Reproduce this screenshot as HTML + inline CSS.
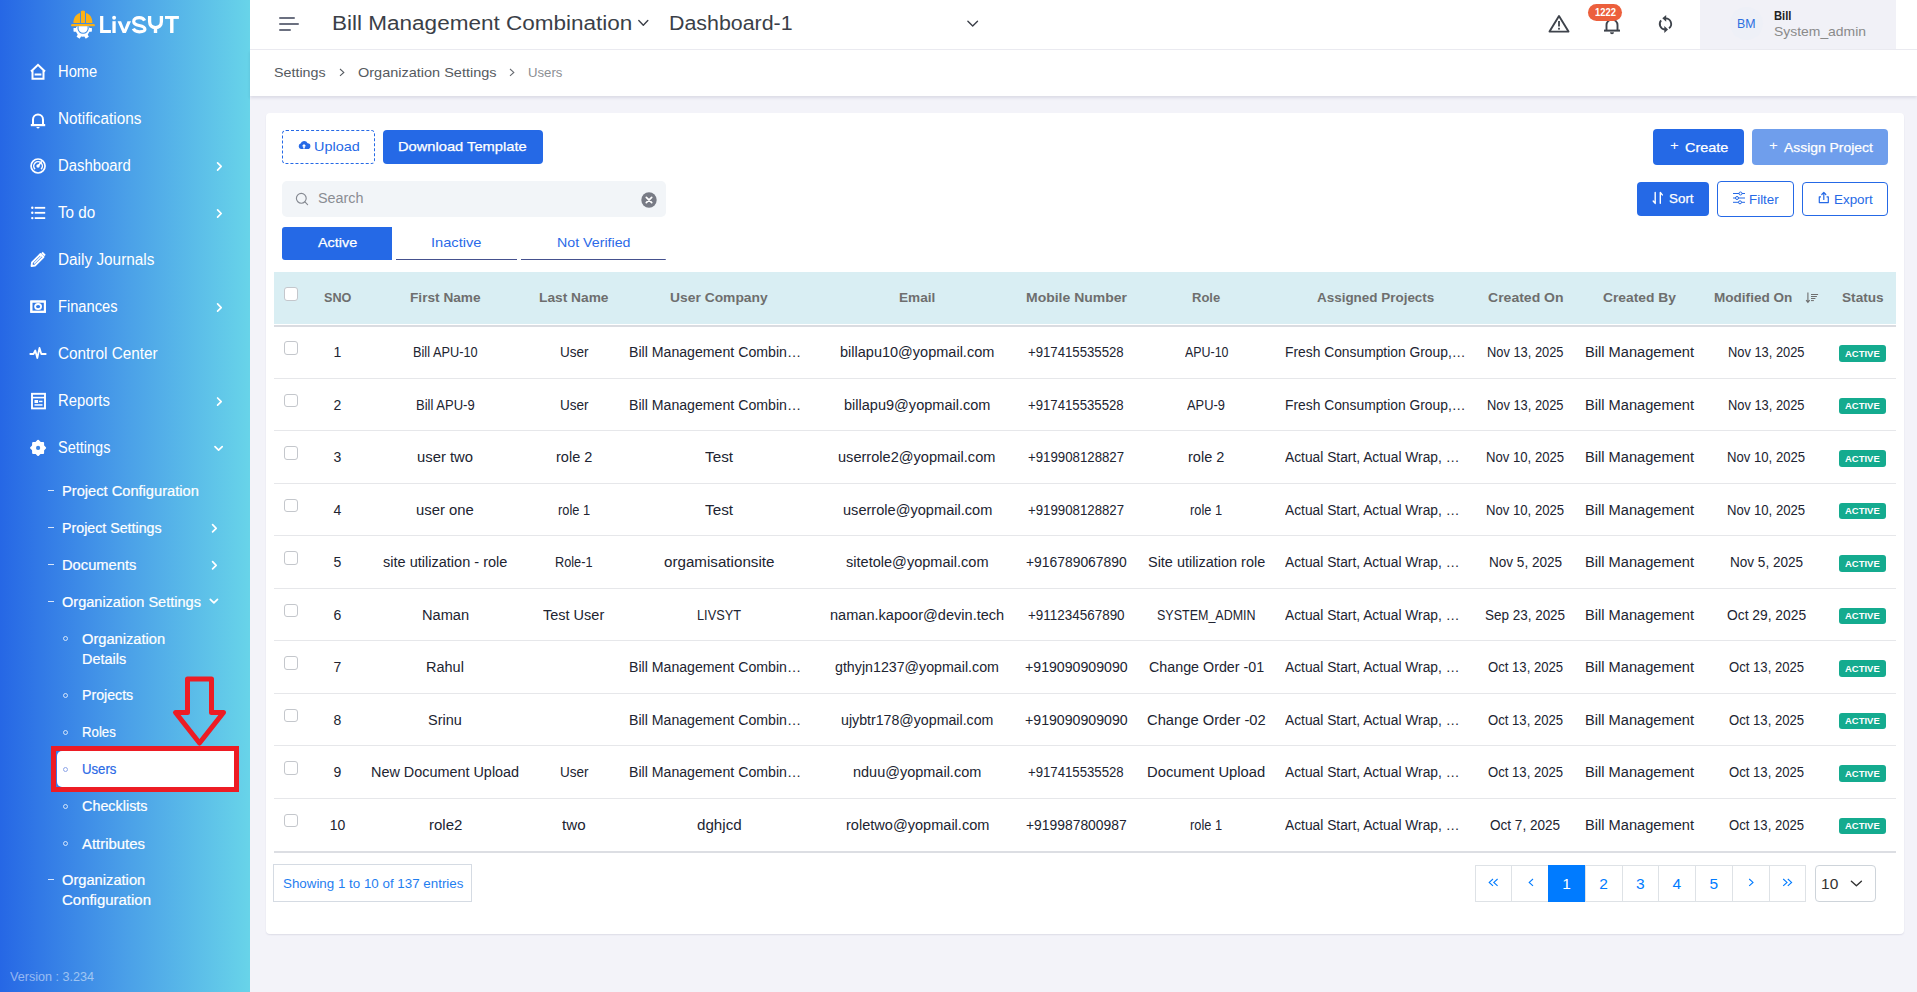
<!DOCTYPE html>
<html><head><meta charset="utf-8"><title>Users</title>
<style>
html,body{margin:0;padding:0;}
body{width:1917px;height:992px;overflow:hidden;position:relative;background:#f3f3f9;font-family:"Liberation Sans", sans-serif;}
.t{position:absolute;white-space:nowrap;transform-origin:0 0;}
svg{overflow:visible}
</style></head><body>
<div style="position:absolute;left:0;top:0;width:250px;height:992px;background:linear-gradient(90deg,#2667e5 0%,#4a9fe8 50%,#68d4e9 100%);"></div>
<div style="position:absolute;left:250px;top:0;width:1667px;height:49px;background:#fff;border-bottom:1px solid #ebebf1;"></div>
<div style="position:absolute;left:250px;top:50px;width:1667px;height:46px;background:#fff;box-shadow:0 2px 3px rgba(30,30,70,0.11);"></div>
<div style="position:absolute;left:266px;top:113px;width:1638px;height:821px;background:#fff;border-radius:4px;box-shadow:0 1px 1.5px rgba(30,30,80,0.10);"></div>
<svg style="position:absolute;left:68px;top:6px" width="30" height="36" viewBox="0 0 30 36">
<defs><clipPath id="gc"><rect x="0" y="20.4" width="30" height="16"/></clipPath></defs>
<path d="M5.4 16.9 C5.4 11.5 8.2 7.8 12 6.9 L12 16.9 Z" fill="#fbb116"/>
<path d="M12.9 16.9 L12.9 5.3 Q15 3.6 17 5.3 L17 16.9 Z" fill="#fbb116"/>
<path d="M18 6.9 C21.8 7.8 24.4 11.5 24.4 16.9 L18 16.9 Z" fill="#fbb116"/>
<path d="M3.1 19.2 Q3.1 18 4.5 18 L25.5 18 Q26.9 18 26.9 19.2 L26.4 20.2 L3.6 20.2 Z" fill="#fbb116"/>
<g clip-path="url(#gc)">
<circle cx="14.7" cy="23.8" r="7" fill="#fff"/>
<g fill="#fff" transform="translate(14.7 23.8)">
<rect x="5.8" y="-1.9" width="3.4" height="3.8" rx="0.6"/>
<rect x="5.8" y="-1.9" width="3.4" height="3.8" rx="0.6" transform="rotate(60)"/>
<rect x="5.8" y="-1.9" width="3.4" height="3.8" rx="0.6" transform="rotate(120)"/>
<rect x="5.8" y="-1.9" width="3.4" height="3.8" rx="0.6" transform="rotate(180)"/>
<rect x="5.8" y="-1.9" width="3.4" height="3.8" rx="0.6" transform="rotate(240)"/>
<rect x="5.8" y="-1.9" width="3.4" height="3.8" rx="0.6" transform="rotate(300)"/>
</g>
<circle cx="15.1" cy="22.2" r="5.1" fill="#fff" stroke="#3f8fe7" stroke-width="1.1"/>
</g>
</svg>
<svg style="position:absolute;left:96px;top:10px" width="90" height="30" viewBox="0 0 90 30"><g fill="#fff">
<path d="M4.1 6 H7.3 V20.1 H14.9 V23 H4.1 Z"/>
<circle cx="18.1" cy="7.7" r="1.95"/><rect x="16.4" y="11.2" width="3.3" height="11.8"/>
<path d="M21.6 11.2 H25.1 L28.3 19.2 L31.5 11.2 H35 L29.9 23 H26.7 Z"/>
<rect x="69" y="6" width="13.9" height="2.9"/><rect x="74.1" y="6" width="3.4" height="17"/>
<rect x="57.8" y="16" width="3.4" height="7"/>
</g>
<path d="M48.6 10.6 C47.7 8.6 45.8 7.6 43.2 7.6 C40.1 7.6 37.7 9.1 37.7 11.6 C37.7 14.4 40.5 15 43.2 15.5 C46.2 16.1 48.9 16.9 48.9 19.3 C48.9 21.4 46.6 21.8 43.3 21.8 C40.4 21.8 38.3 20.9 37.3 18.7" fill="none" stroke="#fff" stroke-width="3.2"/>
<path d="M53.6 6 V11.6 C53.6 15.3 56 17.6 59.5 17.6 C63 17.6 65.4 15.3 65.4 11.6 V6" fill="none" stroke="#fff" stroke-width="3.3"/>
</svg>
<svg style="position:absolute;left:0;top:0" width="1" height="1"><path d="M217.60 162.86 L221.20 166.46 L217.60 170.06" fill="none" stroke="#fff" stroke-width="1.7" stroke-linecap="round" stroke-linejoin="round"/></svg>
<svg style="position:absolute;left:0;top:0" width="1" height="1"><path d="M217.60 209.89 L221.20 213.49 L217.60 217.09" fill="none" stroke="#fff" stroke-width="1.7" stroke-linecap="round" stroke-linejoin="round"/></svg>
<svg style="position:absolute;left:0;top:0" width="1" height="1"><path d="M217.60 303.95 L221.20 307.55 L217.60 311.15" fill="none" stroke="#fff" stroke-width="1.7" stroke-linecap="round" stroke-linejoin="round"/></svg>
<svg style="position:absolute;left:0;top:0" width="1" height="1"><path d="M217.60 398.01 L221.20 401.61 L217.60 405.21" fill="none" stroke="#fff" stroke-width="1.7" stroke-linecap="round" stroke-linejoin="round"/></svg>
<svg style="position:absolute;left:0;top:0" width="1" height="1"><path d="M215.00 446.60 L218.60 450.20 L222.20 446.60" fill="none" stroke="#fff" stroke-width="1.7" stroke-linecap="round" stroke-linejoin="round"/></svg>
<svg style="position:absolute;left:29px;top:63px" width="18" height="17" viewBox="0 0 18 17"><path d="M2 8.5 L9 1.8 L16 8.5" fill="none" stroke="#fff" stroke-width="2" stroke-linejoin="miter"/><path d="M3.5 7.5 V15.8 H14.5 V7.5" fill="none" stroke="#fff" stroke-width="2"/><rect x="5.6" y="10.5" width="6.8" height="2" fill="#fff"/></svg>
<svg style="position:absolute;left:29px;top:111px" width="18" height="19" viewBox="0 0 18 19"><path d="M4 13.5 V8.5 A5 5 0 0 1 14 8.5 V13.5" fill="none" stroke="#fff" stroke-width="2"/><rect x="1.8" y="13" width="14.4" height="2.2" fill="#fff"/><path d="M7 16 H11 L9 17.8 Z" fill="#fff"/></svg>
<svg style="position:absolute;left:29px;top:157px" width="18" height="18" viewBox="0 0 18 18"><circle cx="9.05" cy="9" r="7" fill="none" stroke="#fff" stroke-width="1.7"/><path d="M6 12.1 A4.3 4.3 0 1 1 12.1 12.1" fill="none" stroke="#fff" stroke-width="1.5"/><path d="M9.05 9 L12.3 5" stroke="#fff" stroke-width="1.7" stroke-linecap="round"/><circle cx="9.05" cy="9" r="1.7" fill="#fff"/></svg>
<svg style="position:absolute;left:29px;top:203px" width="18" height="18" viewBox="0 0 18 18"><circle cx="3.3" cy="4.8" r="1.2" fill="#fff"/><circle cx="3.3" cy="9.8" r="1.2" fill="#fff"/><circle cx="3.3" cy="15.1" r="1.2" fill="#fff"/><rect x="5.7" y="3.9" width="10.5" height="1.8" fill="#fff"/><rect x="5.7" y="8.9" width="10.5" height="1.8" fill="#fff"/><rect x="5.7" y="14.2" width="10.5" height="1.8" fill="#fff"/></svg>
<svg style="position:absolute;left:29px;top:251px" width="18" height="17" viewBox="0 0 18 17"><path d="M2.5 15 L3 11.5 L11.5 3 L14.5 6 L6 14.5 Z" fill="none" stroke="#fff" stroke-width="1.8" stroke-linejoin="round"/><path d="M5 12.5 L12.5 5" stroke="#fff" stroke-width="1.2"/><path d="M13 1.5 L16 4.5" stroke="#fff" stroke-width="2"/></svg>
<svg style="position:absolute;left:29px;top:299px" width="18" height="15" viewBox="0 0 18 15"><rect x="1.3" y="1.5" width="15.6" height="12.3" fill="#fff"/><rect x="3.3" y="3.5" width="11.6" height="8.3" fill="#3179e6"/><rect x="2.3" y="2.5" width="13.6" height="10.3" fill="none" stroke="#fff" stroke-width="2"/><ellipse cx="9.1" cy="7.6" rx="3" ry="2.6" fill="none" stroke="#fff" stroke-width="1.8"/></svg>
<svg style="position:absolute;left:29px;top:346px" width="18" height="14" viewBox="0 0 18 14"><path d="M1.3 8 H4.5 L6.3 4.5 L8.3 12 L10.5 2 L12.3 8 H16.7" fill="none" stroke="#fff" stroke-width="1.8" stroke-linejoin="round" stroke-linecap="round"/></svg>
<svg style="position:absolute;left:29px;top:392px" width="18" height="18" viewBox="0 0 18 18"><rect x="3" y="1.8" width="13" height="14.6" fill="none" stroke="#fff" stroke-width="1.9"/><rect x="3" y="4.8" width="13" height="1.6" fill="#fff"/><rect x="5.5" y="8" width="3.6" height="3" fill="#fff"/><rect x="10" y="8.7" width="3.5" height="1.5" fill="#fff"/><rect x="5.5" y="12.2" width="8" height="1.5" fill="#fff"/></svg>
<svg style="position:absolute;left:29px;top:439px" width="18" height="18" viewBox="0 0 18 18"><g transform="translate(9.1 8.9)"><rect x="-6" y="-6" width="12" height="12" rx="1" fill="#fff"/><rect x="-6" y="-6" width="12" height="12" rx="1" fill="#fff" transform="rotate(45)"/></g><circle cx="9.1" cy="8.9" r="2.1" fill="#3a84e6"/></svg>
<div style="position:absolute;left:48px;top:489.7px;width:5.5px;height:1.3px;background:rgba(255,255,255,0.8)"></div>
<div style="position:absolute;left:48px;top:526.7px;width:5.5px;height:1.3px;background:rgba(255,255,255,0.8)"></div>
<svg style="position:absolute;left:0;top:0" width="1" height="1"><path d="M212.60 524.70 L216.20 528.30 L212.60 531.90" fill="none" stroke="#fff" stroke-width="1.7" stroke-linecap="round" stroke-linejoin="round"/></svg>
<div style="position:absolute;left:48px;top:563.7px;width:5.5px;height:1.3px;background:rgba(255,255,255,0.8)"></div>
<svg style="position:absolute;left:0;top:0" width="1" height="1"><path d="M212.60 561.70 L216.20 565.30 L212.60 568.90" fill="none" stroke="#fff" stroke-width="1.7" stroke-linecap="round" stroke-linejoin="round"/></svg>
<div style="position:absolute;left:48px;top:600.7px;width:5.5px;height:1.3px;background:rgba(255,255,255,0.8)"></div>
<svg style="position:absolute;left:0;top:0" width="1" height="1"><path d="M210.30 599.30 L213.90 602.90 L217.50 599.30" fill="none" stroke="#fff" stroke-width="1.7" stroke-linecap="round" stroke-linejoin="round"/></svg>
<div style="position:absolute;left:57px;top:751px;width:178px;height:36px;background:#fff;border-radius:5px 0 0 5px;box-shadow:-1.5px 0 0 #3a7be6"></div>
<div style="position:absolute;left:63px;top:636.0px;width:5px;height:5px;border-radius:50%;border:1.2px solid rgba(255,255,255,0.75);box-sizing:border-box"></div>
<div style="position:absolute;left:63px;top:692.5px;width:5px;height:5px;border-radius:50%;border:1.2px solid rgba(255,255,255,0.75);box-sizing:border-box"></div>
<div style="position:absolute;left:63px;top:729.5px;width:5px;height:5px;border-radius:50%;border:1.2px solid rgba(255,255,255,0.75);box-sizing:border-box"></div>
<div style="position:absolute;left:63px;top:766.7px;width:5px;height:5px;border-radius:50%;border:1.2px solid #8fa6e8;box-sizing:border-box"></div>
<div style="position:absolute;left:63px;top:803.6px;width:5px;height:5px;border-radius:50%;border:1.2px solid rgba(255,255,255,0.75);box-sizing:border-box"></div>
<div style="position:absolute;left:63px;top:840.9px;width:5px;height:5px;border-radius:50%;border:1.2px solid rgba(255,255,255,0.75);box-sizing:border-box"></div>
<div style="position:absolute;left:48px;top:879px;width:5.5px;height:1.3px;background:rgba(255,255,255,0.8)"></div>
<div style="position:absolute;left:51px;top:746px;width:188px;height:46px;border:5px solid #ed1c24;box-sizing:border-box"></div>
<svg style="position:absolute;left:0;top:0" width="250" height="992"><path d="M187.5 679 H211.5 V712.5 H223.5 L199.5 743 L175.5 712.5 H187.5 Z" fill="none" stroke="#ed1c24" stroke-width="5" stroke-linejoin="round"/></svg>
<div style="position:absolute;left:279px;top:17px;width:16px;height:2px;background:#6b7080;border-radius:1px"></div>
<div style="position:absolute;left:279px;top:23px;width:20px;height:2px;background:#6b7080;border-radius:1px"></div>
<div style="position:absolute;left:279px;top:29px;width:12px;height:2px;background:#6b7080;border-radius:1px"></div>
<svg style="position:absolute;left:0;top:0" width="1" height="1"><path d="M638.80 20.60 L643.30 25.20 L647.80 20.60" fill="none" stroke="#3b3f48" stroke-width="1.4" stroke-linecap="round" stroke-linejoin="round"/></svg>
<svg style="position:absolute;left:0;top:0" width="1" height="1"><path d="M967.90 21.30 L972.70 26.00 L977.50 21.30" fill="none" stroke="#3b3f48" stroke-width="1.4" stroke-linecap="round" stroke-linejoin="round"/></svg>
<svg style="position:absolute;left:1548px;top:14px" width="22" height="19" viewBox="0 0 22 19"><path d="M11 2 L20.5 17.6 H1.5 Z" fill="none" stroke="#3e434b" stroke-width="1.9" stroke-linejoin="round"/><rect x="10.1" y="7" width="1.8" height="5.5" fill="#3e434b"/><rect x="10.1" y="13.8" width="1.8" height="1.8" fill="#3e434b"/></svg>
<svg style="position:absolute;left:1601px;top:16px" width="22" height="19" viewBox="0 0 22 19"><path d="M5.5 14 V9 A5.5 5.5 0 0 1 16.5 9 V14" fill="none" stroke="#3e434b" stroke-width="1.9"/><rect x="3" y="13.6" width="16" height="2" fill="#3e434b"/><path d="M9 16.3 H13 A2 2 0 0 1 9 16.3Z" fill="#3e434b"/></svg>
<div style="position:absolute;left:1588px;top:4px;width:34px;height:16.5px;background:#ec5f3c;border-radius:9px"></div>
<svg style="position:absolute;left:1655px;top:13px" width="20" height="21" viewBox="0 0 20 21"><path d="M10.6 5.3 A5.6 5.6 0 0 1 14 15.3" fill="none" stroke="#3e434b" stroke-width="1.8"/><path d="M7.3 5.3 L11.2 1.9 L11.2 8.7 Z" fill="#3e434b"/><path d="M6.1 7.3 A5.6 5.6 0 0 0 9.9 16.5" fill="none" stroke="#3e434b" stroke-width="1.8"/><path d="M13 16.5 L9.3 13.1 L9.3 19.9 Z" fill="#3e434b"/></svg>
<div style="position:absolute;left:1700px;top:0;width:196px;height:49px;background:#f1f1f7"></div>
<div style="position:absolute;left:1730px;top:7px;width:33px;height:33px;border-radius:50%;background:#eef0f7"></div>
<svg style="position:absolute;left:339px;top:68px" width="6" height="9" viewBox="0 0 6 9"><path d="M1 1 L4.8 4.4 L1 7.8" fill="none" stroke="#555a60" stroke-width="1.1"/></svg>
<svg style="position:absolute;left:508.5px;top:68px" width="6" height="9" viewBox="0 0 6 9"><path d="M1 1 L4.8 4.4 L1 7.8" fill="none" stroke="#666a70" stroke-width="1.1"/></svg>
<div style="position:absolute;left:282px;top:130px;width:93px;height:34px;border:1.3px dashed #2569e6;border-radius:4px;box-sizing:border-box"></div>
<svg style="position:absolute;left:298px;top:140px" width="12" height="10" viewBox="0 0 12 10"><path d="M3 9 A2.8 2.8 0 0 1 2.6 3.6 A3.8 3.8 0 0 1 9.6 3.2 A2.9 2.9 0 0 1 9.4 9 Z" fill="#2569e6"/><path d="M6 4 L8.2 6.3 H6.8 V8.5 H5.2 V6.3 H3.8 Z" fill="#fff"/></svg>
<div style="position:absolute;left:383px;top:130px;width:160px;height:34px;background:#2569e6;border-radius:4px"></div>
<div style="position:absolute;left:282px;top:181px;width:384px;height:36px;background:#f2f5f8;border-radius:5px"></div>
<svg style="position:absolute;left:295px;top:192px" width="14" height="14" viewBox="0 0 14 14"><circle cx="6.3" cy="6.3" r="4.9" fill="none" stroke="#868a92" stroke-width="1.15"/><path d="M9.9 9.9 L12.6 12.6" stroke="#868a92" stroke-width="1.15" stroke-linecap="round"/></svg>
<svg style="position:absolute;left:641px;top:192px" width="16" height="16" viewBox="0 0 16 16"><circle cx="8" cy="8" r="7.7" fill="#787b85"/><path d="M5.3 5.3 L10.7 10.7 M10.7 5.3 L5.3 10.7" stroke="#fff" stroke-width="1.7" stroke-linecap="round"/></svg>
<div style="position:absolute;left:282px;top:227px;width:110px;height:33px;background:#2569e6;border-radius:3px 0 0 3px"></div>
<div style="position:absolute;left:396px;top:258.8px;width:121px;height:1.3px;background:#45518e"></div>
<div style="position:absolute;left:521px;top:258.8px;width:145px;height:1.3px;background:#45518e;border-radius:0 0 3px 0"></div>
<div style="position:absolute;left:1653px;top:129px;width:91px;height:36px;background:#2569e6;border-radius:4px"></div>
<div style="position:absolute;left:1752px;top:129px;width:136px;height:36px;background:#6f9eec;border-radius:4px"></div>
<div style="position:absolute;left:1637px;top:182px;width:72px;height:34px;background:#2569e6;border-radius:4px"></div>
<svg style="position:absolute;left:1652px;top:191px" width="12" height="14" viewBox="0 0 12 14"><path d="M3.2 1.5 V12.3 M1.2 10 L3.2 12.4 M8.3 12.3 V1.6 M8.3 1.5 L10.3 3.9" fill="none" stroke="#fff" stroke-width="1.4" stroke-linecap="round"/></svg>
<div style="position:absolute;left:1717px;top:181px;width:77px;height:36px;border:1px solid #2569e6;border-radius:4px;box-sizing:border-box"></div>
<svg style="position:absolute;left:1732px;top:191px" width="14" height="14" viewBox="0 0 14 14"><path d="M1 2.5 H13 M1 7 H13 M1 11.3 H13" stroke="#2569e6" stroke-width="1"/><circle cx="8.5" cy="2.5" r="1.5" fill="#fff" stroke="#2569e6" stroke-width="1"/><circle cx="5" cy="7" r="1.5" fill="#fff" stroke="#2569e6" stroke-width="1"/><circle cx="8" cy="11.3" r="1.5" fill="#fff" stroke="#2569e6" stroke-width="1"/></svg>
<div style="position:absolute;left:1802px;top:182px;width:86px;height:34px;border:1px solid #2569e6;border-radius:4px;box-sizing:border-box"></div>
<svg style="position:absolute;left:1817px;top:190px" width="13" height="14" viewBox="0 0 13 14"><path d="M4 6.8 H2.3 V12.6 H11.3 V6.8 H9.6" fill="none" stroke="#2569e6" stroke-width="1.2" stroke-linejoin="round"/><path d="M6.8 9.5 V2.6 M4.8 4.5 L6.8 2.4 L8.8 4.5" fill="none" stroke="#2569e6" stroke-width="1.2" stroke-linecap="round" stroke-linejoin="round"/></svg>
<div style="position:absolute;left:274px;top:272px;width:1622px;height:52px;background:#d9eef3"></div>
<div style="position:absolute;left:274px;top:325px;width:1622px;height:2px;background:#dadce1"></div>
<div style="position:absolute;left:274px;top:378px;width:1622px;height:1px;background:#e6e7ea"></div>
<div style="position:absolute;left:274px;top:430px;width:1622px;height:1px;background:#e6e7ea"></div>
<div style="position:absolute;left:274px;top:483px;width:1622px;height:1px;background:#e6e7ea"></div>
<div style="position:absolute;left:274px;top:535px;width:1622px;height:1px;background:#e6e7ea"></div>
<div style="position:absolute;left:274px;top:588px;width:1622px;height:1px;background:#e6e7ea"></div>
<div style="position:absolute;left:274px;top:640px;width:1622px;height:1px;background:#e6e7ea"></div>
<div style="position:absolute;left:274px;top:693px;width:1622px;height:1px;background:#e6e7ea"></div>
<div style="position:absolute;left:274px;top:745px;width:1622px;height:1px;background:#e6e7ea"></div>
<div style="position:absolute;left:274px;top:798px;width:1622px;height:1px;background:#e6e7ea"></div>
<div style="position:absolute;left:274px;top:851px;width:1622px;height:2px;background:#dcdee3"></div>
<div style="position:absolute;left:284.3px;top:287px;width:13.5px;height:13.5px;border:1px solid #c4c7cc;border-radius:3px;box-sizing:border-box;background:#fff"></div>
<svg style="position:absolute;left:1805px;top:292px" width="14" height="12" viewBox="0 0 14 12"><path d="M2.9 0.4 V10.2 M1.1 8.2 L2.9 10.3 L4.7 8.2" fill="none" stroke="#6e6e6e" stroke-width="1.1"/><path d="M6.4 2.5 H12.7 M6.4 4.5 H11.5 M6.4 6.5 H10 M6.4 8.6 H8.5" stroke="#6e6e6e" stroke-width="1" stroke-linecap="round"/></svg>
<div style="position:absolute;left:284.3px;top:341.0px;width:13.5px;height:13.5px;border:1px solid #c4c7cc;border-radius:3px;box-sizing:border-box;background:#fff"></div>
<div style="position:absolute;left:1839px;top:345.2px;width:47px;height:16.7px;background:#14ab8f;border-radius:3px"></div>
<div style="position:absolute;left:284.3px;top:393.5px;width:13.5px;height:13.5px;border:1px solid #c4c7cc;border-radius:3px;box-sizing:border-box;background:#fff"></div>
<div style="position:absolute;left:1839px;top:397.7px;width:47px;height:16.7px;background:#14ab8f;border-radius:3px"></div>
<div style="position:absolute;left:284.3px;top:446.0px;width:13.5px;height:13.5px;border:1px solid #c4c7cc;border-radius:3px;box-sizing:border-box;background:#fff"></div>
<div style="position:absolute;left:1839px;top:450.2px;width:47px;height:16.7px;background:#14ab8f;border-radius:3px"></div>
<div style="position:absolute;left:284.3px;top:498.5px;width:13.5px;height:13.5px;border:1px solid #c4c7cc;border-radius:3px;box-sizing:border-box;background:#fff"></div>
<div style="position:absolute;left:1839px;top:502.7px;width:47px;height:16.7px;background:#14ab8f;border-radius:3px"></div>
<div style="position:absolute;left:284.3px;top:551.0px;width:13.5px;height:13.5px;border:1px solid #c4c7cc;border-radius:3px;box-sizing:border-box;background:#fff"></div>
<div style="position:absolute;left:1839px;top:555.2px;width:47px;height:16.7px;background:#14ab8f;border-radius:3px"></div>
<div style="position:absolute;left:284.3px;top:603.5px;width:13.5px;height:13.5px;border:1px solid #c4c7cc;border-radius:3px;box-sizing:border-box;background:#fff"></div>
<div style="position:absolute;left:1839px;top:607.7px;width:47px;height:16.7px;background:#14ab8f;border-radius:3px"></div>
<div style="position:absolute;left:284.3px;top:656.0px;width:13.5px;height:13.5px;border:1px solid #c4c7cc;border-radius:3px;box-sizing:border-box;background:#fff"></div>
<div style="position:absolute;left:1839px;top:660.2px;width:47px;height:16.7px;background:#14ab8f;border-radius:3px"></div>
<div style="position:absolute;left:284.3px;top:708.5px;width:13.5px;height:13.5px;border:1px solid #c4c7cc;border-radius:3px;box-sizing:border-box;background:#fff"></div>
<div style="position:absolute;left:1839px;top:712.7px;width:47px;height:16.7px;background:#14ab8f;border-radius:3px"></div>
<div style="position:absolute;left:284.3px;top:761.0px;width:13.5px;height:13.5px;border:1px solid #c4c7cc;border-radius:3px;box-sizing:border-box;background:#fff"></div>
<div style="position:absolute;left:1839px;top:765.2px;width:47px;height:16.7px;background:#14ab8f;border-radius:3px"></div>
<div style="position:absolute;left:284.3px;top:813.5px;width:13.5px;height:13.5px;border:1px solid #c4c7cc;border-radius:3px;box-sizing:border-box;background:#fff"></div>
<div style="position:absolute;left:1839px;top:817.7px;width:47px;height:16.7px;background:#14ab8f;border-radius:3px"></div>
<div style="position:absolute;left:273px;top:864px;width:199px;height:38px;border:1px solid #d5dbe3;box-sizing:border-box"></div>
<div style="position:absolute;left:1475px;top:865px;width:331px;height:37px;border:1px solid #dee2e6;box-sizing:border-box"></div>
<div style="position:absolute;left:1511.2px;top:865px;width:1px;height:37px;background:#dee2e6"></div>
<div style="position:absolute;left:1548.0px;top:865px;width:1px;height:37px;background:#dee2e6"></div>
<div style="position:absolute;left:1585.0px;top:865px;width:1px;height:37px;background:#dee2e6"></div>
<div style="position:absolute;left:1622.3px;top:865px;width:1px;height:37px;background:#dee2e6"></div>
<div style="position:absolute;left:1658.3px;top:865px;width:1px;height:37px;background:#dee2e6"></div>
<div style="position:absolute;left:1695.3px;top:865px;width:1px;height:37px;background:#dee2e6"></div>
<div style="position:absolute;left:1732.2px;top:865px;width:1px;height:37px;background:#dee2e6"></div>
<div style="position:absolute;left:1768.5px;top:865px;width:1px;height:37px;background:#dee2e6"></div>
<div style="position:absolute;left:1548px;top:865px;width:37px;height:37px;background:#007bff"></div>
<svg style="position:absolute;left:1488px;top:878px" width="12" height="10" viewBox="0 0 12 10"><path d="M5 1 L1.2 4.4 L5 7.8 M9.6 1 L5.8 4.4 L9.6 7.8" fill="none" stroke="#007bff" stroke-width="1.1"/></svg>
<svg style="position:absolute;left:1527.5px;top:878px" width="7" height="10" viewBox="0 0 7 10"><path d="M5 1 L1.2 4.4 L5 7.8" fill="none" stroke="#007bff" stroke-width="1.1"/></svg>
<svg style="position:absolute;left:1747.5px;top:878px" width="7" height="10" viewBox="0 0 7 10"><path d="M1.2 1 L5 4.4 L1.2 7.8" fill="none" stroke="#007bff" stroke-width="1.1"/></svg>
<svg style="position:absolute;left:1781.5px;top:878px" width="12" height="10" viewBox="0 0 12 10"><path d="M1.2 1 L5 4.4 L1.2 7.8 M5.8 1 L9.6 4.4 L5.8 7.8" fill="none" stroke="#007bff" stroke-width="1.1"/></svg>
<div style="position:absolute;left:1814.5px;top:865px;width:61px;height:37px;border:1px solid #ced4da;border-radius:4px;box-sizing:border-box"></div>
<svg style="position:absolute;left:0;top:0" width="1" height="1"><path d="M1851.40 881.20 L1856.40 885.80 L1861.40 881.20" fill="none" stroke="#333" stroke-width="1.4" stroke-linecap="round" stroke-linejoin="round"/></svg>
<div class="t" style="left:57.70px;top:63.59px;font-size:15.6px;line-height:15.6px;color:#fff;font-weight:400;transform:scaleX(0.9448);">Home</div>
<div class="t" style="left:57.70px;top:110.62px;font-size:15.6px;line-height:15.6px;color:#fff;font-weight:400;transform:scaleX(0.9807);">Notifications</div>
<div class="t" style="left:57.70px;top:157.65px;font-size:15.6px;line-height:15.6px;color:#fff;font-weight:400;transform:scaleX(0.9543);">Dashboard</div>
<div class="t" style="left:57.70px;top:204.68px;font-size:15.6px;line-height:15.6px;color:#fff;font-weight:400;transform:scaleX(0.9752);">To do</div>
<div class="t" style="left:57.70px;top:251.71px;font-size:15.6px;line-height:15.6px;color:#fff;font-weight:400;transform:scaleX(0.9843);">Daily Journals</div>
<div class="t" style="left:57.70px;top:298.74px;font-size:15.6px;line-height:15.6px;color:#fff;font-weight:400;transform:scaleX(0.9404);">Finances</div>
<div class="t" style="left:57.70px;top:345.77px;font-size:15.6px;line-height:15.6px;color:#fff;font-weight:400;transform:scaleX(0.9822);">Control Center</div>
<div class="t" style="left:57.70px;top:392.80px;font-size:15.6px;line-height:15.6px;color:#fff;font-weight:400;transform:scaleX(0.9505);">Reports</div>
<div class="t" style="left:57.70px;top:439.83px;font-size:15.6px;line-height:15.6px;color:#fff;font-weight:400;transform:scaleX(0.9300);">Settings</div>
<div class="t" style="left:62.40px;top:483.85px;font-size:14px;line-height:14px;color:#fff;font-weight:400;transform:scaleX(1.0464);-webkit-text-stroke:0.2px #fff;">Project Configuration</div>
<div class="t" style="left:62.40px;top:520.85px;font-size:14px;line-height:14px;color:#fff;font-weight:400;transform:scaleX(1.0158);-webkit-text-stroke:0.2px #fff;">Project Settings</div>
<div class="t" style="left:62.40px;top:557.85px;font-size:14px;line-height:14px;color:#fff;font-weight:400;transform:scaleX(1.0507);-webkit-text-stroke:0.2px #fff;">Documents</div>
<div class="t" style="left:62.40px;top:594.85px;font-size:14px;line-height:14px;color:#fff;font-weight:400;transform:scaleX(1.0377);-webkit-text-stroke:0.2px #fff;">Organization Settings</div>
<div class="t" style="left:82.00px;top:631.65px;font-size:14px;line-height:14px;color:#fff;font-weight:400;transform:scaleX(1.0469);-webkit-text-stroke:0.2px #fff;">Organization</div>
<div class="t" style="left:82.00px;top:651.55px;font-size:14px;line-height:14px;color:#fff;font-weight:400;transform:scaleX(1.0305);-webkit-text-stroke:0.2px #fff;">Details</div>
<div class="t" style="left:82.00px;top:688.15px;font-size:14px;line-height:14px;color:#fff;font-weight:400;transform:scaleX(1.0124);-webkit-text-stroke:0.2px #fff;">Projects</div>
<div class="t" style="left:82.00px;top:725.15px;font-size:14px;line-height:14px;color:#fff;font-weight:400;transform:scaleX(0.9443);-webkit-text-stroke:0.2px #fff;">Roles</div>
<div class="t" style="left:82.00px;top:762.35px;font-size:14px;line-height:14px;color:#2a69e6;font-weight:400;transform:scaleX(0.9410);-webkit-text-stroke:0.2px #2a69e6;">Users</div>
<div class="t" style="left:82.00px;top:799.25px;font-size:14px;line-height:14px;color:#fff;font-weight:400;transform:scaleX(1.0268);-webkit-text-stroke:0.2px #fff;">Checklists</div>
<div class="t" style="left:82.00px;top:836.55px;font-size:14px;line-height:14px;color:#fff;font-weight:400;transform:scaleX(1.0636);-webkit-text-stroke:0.2px #fff;">Attributes</div>
<div class="t" style="left:62.10px;top:873.45px;font-size:14px;line-height:14px;color:#fff;font-weight:400;transform:scaleX(1.0481);-webkit-text-stroke:0.2px #fff;">Organization</div>
<div class="t" style="left:62.10px;top:893.35px;font-size:14px;line-height:14px;color:#fff;font-weight:400;transform:scaleX(1.0687);-webkit-text-stroke:0.2px #fff;">Configuration</div>
<div class="t" style="left:10.20px;top:971.42px;font-size:12.5px;line-height:12.5px;color:rgba(255,255,255,0.5);font-weight:400;transform:scaleX(1.0085);">Version : 3.234</div>
<div class="t" style="left:332.40px;top:13.07px;font-size:20px;line-height:20px;color:#3b3f48;font-weight:400;transform:scaleX(1.1259);">Bill Management Combination</div>
<div class="t" style="left:669.40px;top:13.07px;font-size:20px;line-height:20px;color:#3b3f48;font-weight:400;transform:scaleX(1.0690);">Dashboard-1</div>
<div class="t" style="left:1594.50px;top:7.54px;font-size:10px;line-height:10px;color:#fff;font-weight:700;transform:scaleX(0.9440);">1222</div>
<div class="t" style="left:1736.70px;top:17.30px;font-size:13px;line-height:13px;color:#2c6fe0;font-weight:400;transform:scaleX(0.9487);">BM</div>
<div class="t" style="left:1774.00px;top:9.20px;font-size:13px;line-height:13px;color:#222;font-weight:700;transform:scaleX(0.8653);">Bill</div>
<div class="t" style="left:1774.00px;top:24.90px;font-size:13px;line-height:13px;color:#8a8a8a;font-weight:400;transform:scaleX(1.0700);">System_admin</div>
<div class="t" style="left:274.30px;top:65.70px;font-size:13px;line-height:13px;color:#555a60;font-weight:400;transform:scaleX(1.0985);">Settings</div>
<div class="t" style="left:357.60px;top:65.70px;font-size:13px;line-height:13px;color:#555a60;font-weight:400;transform:scaleX(1.1143);">Organization Settings</div>
<div class="t" style="left:527.80px;top:65.70px;font-size:13px;line-height:13px;color:#8c8f94;font-weight:400;transform:scaleX(1.0133);">Users</div>
<div class="t" style="left:313.70px;top:140.07px;font-size:13.5px;line-height:13.5px;color:#2569e6;font-weight:400;transform:scaleX(1.0682);">Upload</div>
<div class="t" style="left:398.40px;top:140.07px;font-size:13.5px;line-height:13.5px;color:#fff;font-weight:400;transform:scaleX(1.0872);-webkit-text-stroke:0.25px #fff;">Download Template</div>
<div class="t" style="left:318.00px;top:191.15px;font-size:14px;line-height:14px;color:#8a8d93;font-weight:400;transform:scaleX(1.0257);">Search</div>
<div class="t" style="left:317.60px;top:236.17px;font-size:13.5px;line-height:13.5px;color:#fff;font-weight:400;transform:scaleX(1.0663);-webkit-text-stroke:0.25px #fff;">Active</div>
<div class="t" style="left:431.25px;top:236.17px;font-size:13.5px;line-height:13.5px;color:#2b6ae8;font-weight:400;transform:scaleX(1.0854);">Inactive</div>
<div class="t" style="left:556.55px;top:236.17px;font-size:13.5px;line-height:13.5px;color:#2b6ae8;font-weight:400;transform:scaleX(1.0532);">Not Verified</div>
<div class="t" style="left:1670.30px;top:138.80px;font-size:13px;line-height:13px;color:#fff;font-weight:400;transform:scaleX(1.1591);">+</div>
<div class="t" style="left:1684.60px;top:140.97px;font-size:13.5px;line-height:13.5px;color:#fff;font-weight:400;transform:scaleX(1.0711);-webkit-text-stroke:0.25px #fff;">Create</div>
<div class="t" style="left:1768.90px;top:138.80px;font-size:13px;line-height:13px;color:#fff;font-weight:400;transform:scaleX(1.1591);">+</div>
<div class="t" style="left:1783.70px;top:140.97px;font-size:13.5px;line-height:13.5px;color:#fff;font-weight:400;transform:scaleX(1.0291);-webkit-text-stroke:0.25px #fff;">Assign Project</div>
<div class="t" style="left:1668.60px;top:191.77px;font-size:13.5px;line-height:13.5px;color:#fff;font-weight:400;transform:scaleX(0.9936);-webkit-text-stroke:0.25px #fff;">Sort</div>
<div class="t" style="left:1748.90px;top:192.97px;font-size:13.5px;line-height:13.5px;color:#2569e6;font-weight:400;transform:scaleX(0.9900);">Filter</div>
<div class="t" style="left:1833.80px;top:192.57px;font-size:13.5px;line-height:13.5px;color:#2569e6;font-weight:400;transform:scaleX(0.9919);">Export</div>
<div class="t" style="left:323.60px;top:291.40px;font-size:13px;line-height:13px;color:#6e6e6e;font-weight:700;transform:scaleX(0.9726);">SNO</div>
<div class="t" style="left:410.00px;top:291.40px;font-size:13px;line-height:13px;color:#6e6e6e;font-weight:700;transform:scaleX(1.0508);">First Name</div>
<div class="t" style="left:539.45px;top:291.40px;font-size:13px;line-height:13px;color:#6e6e6e;font-weight:700;transform:scaleX(1.0570);">Last Name</div>
<div class="t" style="left:670.05px;top:291.40px;font-size:13px;line-height:13px;color:#6e6e6e;font-weight:700;transform:scaleX(1.0649);">User Company</div>
<div class="t" style="left:898.95px;top:291.40px;font-size:13px;line-height:13px;color:#6e6e6e;font-weight:700;transform:scaleX(1.0466);">Email</div>
<div class="t" style="left:1025.50px;top:291.40px;font-size:13px;line-height:13px;color:#6e6e6e;font-weight:700;transform:scaleX(1.0757);">Mobile Number</div>
<div class="t" style="left:1192.20px;top:291.40px;font-size:13px;line-height:13px;color:#6e6e6e;font-weight:700;transform:scaleX(1.0010);">Role</div>
<div class="t" style="left:1317.05px;top:291.40px;font-size:13px;line-height:13px;color:#6e6e6e;font-weight:700;transform:scaleX(1.0342);">Assigned Projects</div>
<div class="t" style="left:1487.50px;top:291.40px;font-size:13px;line-height:13px;color:#6e6e6e;font-weight:700;transform:scaleX(1.0789);">Created On</div>
<div class="t" style="left:1603.00px;top:291.40px;font-size:13px;line-height:13px;color:#6e6e6e;font-weight:700;transform:scaleX(1.0636);">Created By</div>
<div class="t" style="left:1713.95px;top:291.40px;font-size:13px;line-height:13px;color:#6e6e6e;font-weight:700;transform:scaleX(1.0426);">Modified On</div>
<div class="t" style="left:1841.65px;top:291.40px;font-size:13px;line-height:13px;color:#6e6e6e;font-weight:700;transform:scaleX(1.0496);">Status</div>
<div class="t" style="left:333.61px;top:345.35px;font-size:14px;line-height:14px;color:#212431;font-weight:400;transform:scaleX(1.0000);">1</div>
<div class="t" style="left:412.65px;top:345.35px;font-size:14px;line-height:14px;color:#212431;font-weight:400;transform:scaleX(0.9123);">Bill APU-10</div>
<div class="t" style="left:559.80px;top:345.35px;font-size:14px;line-height:14px;color:#212431;font-weight:400;transform:scaleX(0.9676);">User</div>
<div class="t" style="left:629.00px;top:345.35px;font-size:14px;line-height:14px;color:#212431;font-weight:400;transform:scaleX(1.0094);">Bill Management Combin…</div>
<div class="t" style="left:840.05px;top:345.35px;font-size:14px;line-height:14px;color:#212431;font-weight:400;transform:scaleX(1.0367);">billapu10@yopmail.com</div>
<div class="t" style="left:1028.45px;top:345.35px;font-size:14px;line-height:14px;color:#212431;font-weight:400;transform:scaleX(0.9418);">+917415535528</div>
<div class="t" style="left:1184.55px;top:345.35px;font-size:14px;line-height:14px;color:#212431;font-weight:400;transform:scaleX(0.8874);">APU-10</div>
<div class="t" style="left:1285.00px;top:345.35px;font-size:14px;line-height:14px;color:#212431;font-weight:400;transform:scaleX(0.9877);">Fresh Consumption Group,…</div>
<div class="t" style="left:1487.05px;top:345.35px;font-size:14px;line-height:14px;color:#212431;font-weight:400;transform:scaleX(0.9186);">Nov 13, 2025</div>
<div class="t" style="left:1585.00px;top:345.35px;font-size:14px;line-height:14px;color:#212431;font-weight:400;transform:scaleX(1.0453);">Bill Management</div>
<div class="t" style="left:1728.15px;top:345.35px;font-size:14px;line-height:14px;color:#212431;font-weight:400;transform:scaleX(0.9186);">Nov 13, 2025</div>
<div class="t" style="left:1845.45px;top:348.70px;font-size:9.8px;line-height:9.8px;color:#fff;font-weight:700;transform:scaleX(0.9659);">ACTIVE</div>
<div class="t" style="left:333.61px;top:397.85px;font-size:14px;line-height:14px;color:#212431;font-weight:400;transform:scaleX(1.0000);">2</div>
<div class="t" style="left:415.61px;top:397.85px;font-size:14px;line-height:14px;color:#212431;font-weight:400;transform:scaleX(0.9308);">Bill APU-9</div>
<div class="t" style="left:559.80px;top:397.85px;font-size:14px;line-height:14px;color:#212431;font-weight:400;transform:scaleX(0.9676);">User</div>
<div class="t" style="left:629.00px;top:397.85px;font-size:14px;line-height:14px;color:#212431;font-weight:400;transform:scaleX(1.0094);">Bill Management Combin…</div>
<div class="t" style="left:843.96px;top:397.85px;font-size:14px;line-height:14px;color:#212431;font-weight:400;transform:scaleX(1.0384);">billapu9@yopmail.com</div>
<div class="t" style="left:1028.45px;top:397.85px;font-size:14px;line-height:14px;color:#212431;font-weight:400;transform:scaleX(0.9418);">+917415535528</div>
<div class="t" style="left:1187.38px;top:397.85px;font-size:14px;line-height:14px;color:#212431;font-weight:400;transform:scaleX(0.9176);">APU-9</div>
<div class="t" style="left:1285.00px;top:397.85px;font-size:14px;line-height:14px;color:#212431;font-weight:400;transform:scaleX(0.9877);">Fresh Consumption Group,…</div>
<div class="t" style="left:1487.05px;top:397.85px;font-size:14px;line-height:14px;color:#212431;font-weight:400;transform:scaleX(0.9186);">Nov 13, 2025</div>
<div class="t" style="left:1585.00px;top:397.85px;font-size:14px;line-height:14px;color:#212431;font-weight:400;transform:scaleX(1.0453);">Bill Management</div>
<div class="t" style="left:1728.15px;top:397.85px;font-size:14px;line-height:14px;color:#212431;font-weight:400;transform:scaleX(0.9186);">Nov 13, 2025</div>
<div class="t" style="left:1845.45px;top:401.20px;font-size:9.8px;line-height:9.8px;color:#fff;font-weight:700;transform:scaleX(0.9659);">ACTIVE</div>
<div class="t" style="left:333.61px;top:450.35px;font-size:14px;line-height:14px;color:#212431;font-weight:400;transform:scaleX(1.0000);">3</div>
<div class="t" style="left:417.29px;top:450.35px;font-size:14px;line-height:14px;color:#212431;font-weight:400;transform:scaleX(1.0588);">user two</div>
<div class="t" style="left:555.94px;top:450.35px;font-size:14px;line-height:14px;color:#212431;font-weight:400;transform:scaleX(1.0372);">role 2</div>
<div class="t" style="left:704.99px;top:450.35px;font-size:14px;line-height:14px;color:#212431;font-weight:400;transform:scaleX(1.0911);">Test</div>
<div class="t" style="left:838.49px;top:450.35px;font-size:14px;line-height:14px;color:#212431;font-weight:400;transform:scaleX(1.0414);">userrole2@yopmail.com</div>
<div class="t" style="left:1028.25px;top:450.35px;font-size:14px;line-height:14px;color:#212431;font-weight:400;transform:scaleX(0.9458);">+919908128827</div>
<div class="t" style="left:1188.14px;top:450.35px;font-size:14px;line-height:14px;color:#212431;font-weight:400;transform:scaleX(1.0372);">role 2</div>
<div class="t" style="left:1285.00px;top:450.35px;font-size:14px;line-height:14px;color:#212431;font-weight:400;transform:scaleX(0.9847);">Actual Start, Actual Wrap, …</div>
<div class="t" style="left:1486.25px;top:450.35px;font-size:14px;line-height:14px;color:#212431;font-weight:400;transform:scaleX(0.9378);">Nov 10, 2025</div>
<div class="t" style="left:1585.00px;top:450.35px;font-size:14px;line-height:14px;color:#212431;font-weight:400;transform:scaleX(1.0453);">Bill Management</div>
<div class="t" style="left:1727.35px;top:450.35px;font-size:14px;line-height:14px;color:#212431;font-weight:400;transform:scaleX(0.9378);">Nov 10, 2025</div>
<div class="t" style="left:1845.45px;top:453.70px;font-size:9.8px;line-height:9.8px;color:#fff;font-weight:700;transform:scaleX(0.9659);">ACTIVE</div>
<div class="t" style="left:333.61px;top:502.85px;font-size:14px;line-height:14px;color:#212431;font-weight:400;transform:scaleX(1.0000);">4</div>
<div class="t" style="left:416.44px;top:502.85px;font-size:14px;line-height:14px;color:#212431;font-weight:400;transform:scaleX(1.0595);">user one</div>
<div class="t" style="left:558.10px;top:502.85px;font-size:14px;line-height:14px;color:#212431;font-weight:400;transform:scaleX(0.9138);">role 1</div>
<div class="t" style="left:704.99px;top:502.85px;font-size:14px;line-height:14px;color:#212431;font-weight:400;transform:scaleX(1.0911);">Test</div>
<div class="t" style="left:842.55px;top:502.85px;font-size:14px;line-height:14px;color:#212431;font-weight:400;transform:scaleX(1.0414);">userrole@yopmail.com</div>
<div class="t" style="left:1028.25px;top:502.85px;font-size:14px;line-height:14px;color:#212431;font-weight:400;transform:scaleX(0.9458);">+919908128827</div>
<div class="t" style="left:1190.30px;top:502.85px;font-size:14px;line-height:14px;color:#212431;font-weight:400;transform:scaleX(0.9138);">role 1</div>
<div class="t" style="left:1285.00px;top:502.85px;font-size:14px;line-height:14px;color:#212431;font-weight:400;transform:scaleX(0.9847);">Actual Start, Actual Wrap, …</div>
<div class="t" style="left:1486.25px;top:502.85px;font-size:14px;line-height:14px;color:#212431;font-weight:400;transform:scaleX(0.9378);">Nov 10, 2025</div>
<div class="t" style="left:1585.00px;top:502.85px;font-size:14px;line-height:14px;color:#212431;font-weight:400;transform:scaleX(1.0453);">Bill Management</div>
<div class="t" style="left:1727.35px;top:502.85px;font-size:14px;line-height:14px;color:#212431;font-weight:400;transform:scaleX(0.9378);">Nov 10, 2025</div>
<div class="t" style="left:1845.45px;top:506.20px;font-size:9.8px;line-height:9.8px;color:#fff;font-weight:700;transform:scaleX(0.9659);">ACTIVE</div>
<div class="t" style="left:333.61px;top:555.35px;font-size:14px;line-height:14px;color:#212431;font-weight:400;transform:scaleX(1.0000);">5</div>
<div class="t" style="left:383.10px;top:555.35px;font-size:14px;line-height:14px;color:#212431;font-weight:400;transform:scaleX(1.0381);">site utilization - role</div>
<div class="t" style="left:555.33px;top:555.35px;font-size:14px;line-height:14px;color:#212431;font-weight:400;transform:scaleX(0.9104);">Role-1</div>
<div class="t" style="left:663.80px;top:555.35px;font-size:14px;line-height:14px;color:#212431;font-weight:400;transform:scaleX(1.0831);">orgamisationsite</div>
<div class="t" style="left:845.92px;top:555.35px;font-size:14px;line-height:14px;color:#212431;font-weight:400;transform:scaleX(1.0395);">sitetole@yopmail.com</div>
<div class="t" style="left:1025.95px;top:555.35px;font-size:14px;line-height:14px;color:#212431;font-weight:400;transform:scaleX(0.9911);">+916789067890</div>
<div class="t" style="left:1147.70px;top:555.35px;font-size:14px;line-height:14px;color:#212431;font-weight:400;transform:scaleX(1.0316);">Site utilization role</div>
<div class="t" style="left:1285.00px;top:555.35px;font-size:14px;line-height:14px;color:#212431;font-weight:400;transform:scaleX(0.9847);">Actual Start, Actual Wrap, …</div>
<div class="t" style="left:1488.75px;top:555.35px;font-size:14px;line-height:14px;color:#212431;font-weight:400;transform:scaleX(0.9683);">Nov 5, 2025</div>
<div class="t" style="left:1585.00px;top:555.35px;font-size:14px;line-height:14px;color:#212431;font-weight:400;transform:scaleX(1.0453);">Bill Management</div>
<div class="t" style="left:1729.85px;top:555.35px;font-size:14px;line-height:14px;color:#212431;font-weight:400;transform:scaleX(0.9683);">Nov 5, 2025</div>
<div class="t" style="left:1845.45px;top:558.70px;font-size:9.8px;line-height:9.8px;color:#fff;font-weight:700;transform:scaleX(0.9659);">ACTIVE</div>
<div class="t" style="left:333.61px;top:607.85px;font-size:14px;line-height:14px;color:#212431;font-weight:400;transform:scaleX(1.0000);">6</div>
<div class="t" style="left:421.73px;top:607.85px;font-size:14px;line-height:14px;color:#212431;font-weight:400;transform:scaleX(1.0445);">Naman</div>
<div class="t" style="left:543.49px;top:607.85px;font-size:14px;line-height:14px;color:#212431;font-weight:400;transform:scaleX(1.0354);">Test User</div>
<div class="t" style="left:697.03px;top:607.85px;font-size:14px;line-height:14px;color:#212431;font-weight:400;transform:scaleX(0.9107);">LIVSYT</div>
<div class="t" style="left:830.10px;top:607.85px;font-size:14px;line-height:14px;color:#212431;font-weight:400;transform:scaleX(1.0397);">naman.kapoor@devin.tech</div>
<div class="t" style="left:1028.00px;top:607.85px;font-size:14px;line-height:14px;color:#212431;font-weight:400;transform:scaleX(0.9605);">+911234567890</div>
<div class="t" style="left:1157.00px;top:607.85px;font-size:14px;line-height:14px;color:#212431;font-weight:400;transform:scaleX(0.8926);">SYSTEM_ADMIN</div>
<div class="t" style="left:1285.00px;top:607.85px;font-size:14px;line-height:14px;color:#212431;font-weight:400;transform:scaleX(0.9847);">Actual Start, Actual Wrap, …</div>
<div class="t" style="left:1485.25px;top:607.85px;font-size:14px;line-height:14px;color:#212431;font-weight:400;transform:scaleX(0.9616);">Sep 23, 2025</div>
<div class="t" style="left:1585.00px;top:607.85px;font-size:14px;line-height:14px;color:#212431;font-weight:400;transform:scaleX(1.0453);">Bill Management</div>
<div class="t" style="left:1726.85px;top:607.85px;font-size:14px;line-height:14px;color:#212431;font-weight:400;transform:scaleX(0.9867);">Oct 29, 2025</div>
<div class="t" style="left:1845.45px;top:611.20px;font-size:9.8px;line-height:9.8px;color:#fff;font-weight:700;transform:scaleX(0.9659);">ACTIVE</div>
<div class="t" style="left:333.61px;top:660.35px;font-size:14px;line-height:14px;color:#212431;font-weight:400;transform:scaleX(1.0000);">7</div>
<div class="t" style="left:426.36px;top:660.35px;font-size:14px;line-height:14px;color:#212431;font-weight:400;transform:scaleX(1.0355);">Rahul</div>
<div class="t" style="left:629.00px;top:660.35px;font-size:14px;line-height:14px;color:#212431;font-weight:400;transform:scaleX(1.0094);">Bill Management Combin…</div>
<div class="t" style="left:835.25px;top:660.35px;font-size:14px;line-height:14px;color:#212431;font-weight:400;transform:scaleX(1.0162);">gthyjn1237@yopmail.com</div>
<div class="t" style="left:1024.95px;top:660.35px;font-size:14px;line-height:14px;color:#212431;font-weight:400;transform:scaleX(1.0107);">+919090909090</div>
<div class="t" style="left:1148.70px;top:660.35px;font-size:14px;line-height:14px;color:#212431;font-weight:400;transform:scaleX(1.0209);">Change Order -01</div>
<div class="t" style="left:1285.00px;top:660.35px;font-size:14px;line-height:14px;color:#212431;font-weight:400;transform:scaleX(0.9847);">Actual Start, Actual Wrap, …</div>
<div class="t" style="left:1487.75px;top:660.35px;font-size:14px;line-height:14px;color:#212431;font-weight:400;transform:scaleX(0.9368);">Oct 13, 2025</div>
<div class="t" style="left:1585.00px;top:660.35px;font-size:14px;line-height:14px;color:#212431;font-weight:400;transform:scaleX(1.0453);">Bill Management</div>
<div class="t" style="left:1728.85px;top:660.35px;font-size:14px;line-height:14px;color:#212431;font-weight:400;transform:scaleX(0.9368);">Oct 13, 2025</div>
<div class="t" style="left:1845.45px;top:663.70px;font-size:9.8px;line-height:9.8px;color:#fff;font-weight:700;transform:scaleX(0.9659);">ACTIVE</div>
<div class="t" style="left:333.61px;top:712.85px;font-size:14px;line-height:14px;color:#212431;font-weight:400;transform:scaleX(1.0000);">8</div>
<div class="t" style="left:428.41px;top:712.85px;font-size:14px;line-height:14px;color:#212431;font-weight:400;transform:scaleX(1.0338);">Srinu</div>
<div class="t" style="left:629.00px;top:712.85px;font-size:14px;line-height:14px;color:#212431;font-weight:400;transform:scaleX(1.0094);">Bill Management Combin…</div>
<div class="t" style="left:840.99px;top:712.85px;font-size:14px;line-height:14px;color:#212431;font-weight:400;transform:scaleX(1.0135);">ujybtr178@yopmail.com</div>
<div class="t" style="left:1024.95px;top:712.85px;font-size:14px;line-height:14px;color:#212431;font-weight:400;transform:scaleX(1.0107);">+919090909090</div>
<div class="t" style="left:1146.95px;top:712.85px;font-size:14px;line-height:14px;color:#212431;font-weight:400;transform:scaleX(1.0519);">Change Order -02</div>
<div class="t" style="left:1285.00px;top:712.85px;font-size:14px;line-height:14px;color:#212431;font-weight:400;transform:scaleX(0.9847);">Actual Start, Actual Wrap, …</div>
<div class="t" style="left:1487.75px;top:712.85px;font-size:14px;line-height:14px;color:#212431;font-weight:400;transform:scaleX(0.9368);">Oct 13, 2025</div>
<div class="t" style="left:1585.00px;top:712.85px;font-size:14px;line-height:14px;color:#212431;font-weight:400;transform:scaleX(1.0453);">Bill Management</div>
<div class="t" style="left:1728.85px;top:712.85px;font-size:14px;line-height:14px;color:#212431;font-weight:400;transform:scaleX(0.9368);">Oct 13, 2025</div>
<div class="t" style="left:1845.45px;top:716.20px;font-size:9.8px;line-height:9.8px;color:#fff;font-weight:700;transform:scaleX(0.9659);">ACTIVE</div>
<div class="t" style="left:333.61px;top:765.35px;font-size:14px;line-height:14px;color:#212431;font-weight:400;transform:scaleX(1.0000);">9</div>
<div class="t" style="left:371.24px;top:765.35px;font-size:14px;line-height:14px;color:#212431;font-weight:400;transform:scaleX(1.0289);">New Document Upload</div>
<div class="t" style="left:559.80px;top:765.35px;font-size:14px;line-height:14px;color:#212431;font-weight:400;transform:scaleX(0.9676);">User</div>
<div class="t" style="left:629.00px;top:765.35px;font-size:14px;line-height:14px;color:#212431;font-weight:400;transform:scaleX(1.0094);">Bill Management Combin…</div>
<div class="t" style="left:853.07px;top:765.35px;font-size:14px;line-height:14px;color:#212431;font-weight:400;transform:scaleX(1.0349);">nduu@yopmail.com</div>
<div class="t" style="left:1028.45px;top:765.35px;font-size:14px;line-height:14px;color:#212431;font-weight:400;transform:scaleX(0.9418);">+917415535528</div>
<div class="t" style="left:1147.20px;top:765.35px;font-size:14px;line-height:14px;color:#212431;font-weight:400;transform:scaleX(1.0548);">Document Upload</div>
<div class="t" style="left:1285.00px;top:765.35px;font-size:14px;line-height:14px;color:#212431;font-weight:400;transform:scaleX(0.9847);">Actual Start, Actual Wrap, …</div>
<div class="t" style="left:1487.75px;top:765.35px;font-size:14px;line-height:14px;color:#212431;font-weight:400;transform:scaleX(0.9368);">Oct 13, 2025</div>
<div class="t" style="left:1585.00px;top:765.35px;font-size:14px;line-height:14px;color:#212431;font-weight:400;transform:scaleX(1.0453);">Bill Management</div>
<div class="t" style="left:1728.85px;top:765.35px;font-size:14px;line-height:14px;color:#212431;font-weight:400;transform:scaleX(0.9368);">Oct 13, 2025</div>
<div class="t" style="left:1845.45px;top:768.70px;font-size:9.8px;line-height:9.8px;color:#fff;font-weight:700;transform:scaleX(0.9659);">ACTIVE</div>
<div class="t" style="left:329.71px;top:817.85px;font-size:14px;line-height:14px;color:#212431;font-weight:400;transform:scaleX(1.0000);">10</div>
<div class="t" style="left:428.60px;top:817.85px;font-size:14px;line-height:14px;color:#212431;font-weight:400;transform:scaleX(1.0727);">role2</div>
<div class="t" style="left:562.30px;top:817.85px;font-size:14px;line-height:14px;color:#212431;font-weight:400;transform:scaleX(1.0831);">two</div>
<div class="t" style="left:696.66px;top:817.85px;font-size:14px;line-height:14px;color:#212431;font-weight:400;transform:scaleX(1.0831);">dghjcd</div>
<div class="t" style="left:845.50px;top:817.85px;font-size:14px;line-height:14px;color:#212431;font-weight:400;transform:scaleX(1.0397);">roletwo@yopmail.com</div>
<div class="t" style="left:1025.95px;top:817.85px;font-size:14px;line-height:14px;color:#212431;font-weight:400;transform:scaleX(0.9911);">+919987800987</div>
<div class="t" style="left:1190.30px;top:817.85px;font-size:14px;line-height:14px;color:#212431;font-weight:400;transform:scaleX(0.9138);">role 1</div>
<div class="t" style="left:1285.00px;top:817.85px;font-size:14px;line-height:14px;color:#212431;font-weight:400;transform:scaleX(0.9847);">Actual Start, Actual Wrap, …</div>
<div class="t" style="left:1490.25px;top:817.85px;font-size:14px;line-height:14px;color:#212431;font-weight:400;transform:scaleX(0.9685);">Oct 7, 2025</div>
<div class="t" style="left:1585.00px;top:817.85px;font-size:14px;line-height:14px;color:#212431;font-weight:400;transform:scaleX(1.0453);">Bill Management</div>
<div class="t" style="left:1728.85px;top:817.85px;font-size:14px;line-height:14px;color:#212431;font-weight:400;transform:scaleX(0.9368);">Oct 13, 2025</div>
<div class="t" style="left:1845.45px;top:821.20px;font-size:9.8px;line-height:9.8px;color:#fff;font-weight:700;transform:scaleX(0.9659);">ACTIVE</div>
<div class="t" style="left:282.60px;top:877.30px;font-size:13px;line-height:13px;color:#1f7ef0;font-weight:400;transform:scaleX(1.0272);">Showing 1 to 10 of 137 entries</div>
<div class="t" style="left:1562.19px;top:875.98px;font-size:15.5px;line-height:15.5px;color:#fff;font-weight:400;transform:scaleX(1.0000);">1</div>
<div class="t" style="left:1599.34px;top:875.98px;font-size:15.5px;line-height:15.5px;color:#007bff;font-weight:400;transform:scaleX(1.0000);">2</div>
<div class="t" style="left:1635.99px;top:875.98px;font-size:15.5px;line-height:15.5px;color:#007bff;font-weight:400;transform:scaleX(1.0000);">3</div>
<div class="t" style="left:1672.49px;top:875.98px;font-size:15.5px;line-height:15.5px;color:#007bff;font-weight:400;transform:scaleX(1.0000);">4</div>
<div class="t" style="left:1709.44px;top:875.98px;font-size:15.5px;line-height:15.5px;color:#007bff;font-weight:400;transform:scaleX(1.0000);">5</div>
<div class="t" style="left:1821.10px;top:875.88px;font-size:15.5px;line-height:15.5px;color:#333;font-weight:400;transform:scaleX(1.0000);">10</div>
</body></html>
